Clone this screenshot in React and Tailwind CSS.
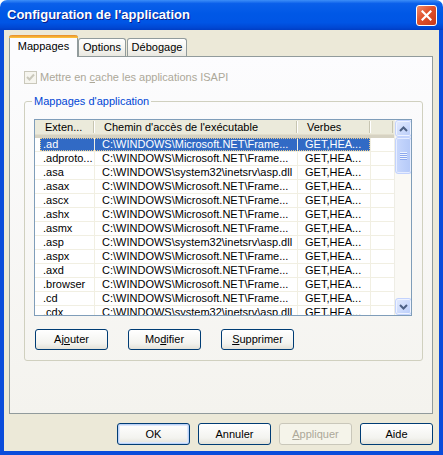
import React from 'react';

const rows = [
  ['.ad', 'C:\\WINDOWS\\Microsoft.NET\\Frame...', 'GET,HEA...'],
  ['.adproto...', 'C:\\WINDOWS\\Microsoft.NET\\Frame...', 'GET,HEA...'],
  ['.asa', 'C:\\WINDOWS\\system32\\inetsrv\\asp.dll', 'GET,HEA...'],
  ['.asax', 'C:\\WINDOWS\\Microsoft.NET\\Frame...', 'GET,HEA...'],
  ['.ascx', 'C:\\WINDOWS\\Microsoft.NET\\Frame...', 'GET,HEA...'],
  ['.ashx', 'C:\\WINDOWS\\Microsoft.NET\\Frame...', 'GET,HEA...'],
  ['.asmx', 'C:\\WINDOWS\\Microsoft.NET\\Frame...', 'GET,HEA...'],
  ['.asp', 'C:\\WINDOWS\\system32\\inetsrv\\asp.dll', 'GET,HEA...'],
  ['.aspx', 'C:\\WINDOWS\\Microsoft.NET\\Frame...', 'GET,HEA...'],
  ['.axd', 'C:\\WINDOWS\\Microsoft.NET\\Frame...', 'GET,HEA...'],
  ['.browser', 'C:\\WINDOWS\\Microsoft.NET\\Frame...', 'GET,HEA...'],
  ['.cd', 'C:\\WINDOWS\\Microsoft.NET\\Frame...', 'GET,HEA...'],
  ['.cdx', 'C:\\WINDOWS\\system32\\inetsrv\\asp.dll', 'GET,HEA...'],
];

function XpButton({ children, w = 'w-[73px]', h = 'h-[22px]', isDefault, disabled }) {
  return (
    <button
      type="button"
      className={`${w} ${h} shrink-0 rounded-[3px] border text-[11px] leading-none flex items-center justify-center ${
        disabled
          ? 'border-[#C9C7BA] bg-[#F5F4EA] text-[#ACA899]'
          : 'border-[#003C74] bg-[linear-gradient(to_bottom,#FFFFFF,#F3F3EF_70%,#E3E1D8)] text-black'
      } ${isDefault ? 'shadow-[inset_0_0_0_1px_#BCD2F7,inset_0_0_0_2px_#DDE8FB]' : ''}`}
    >
      {children}
    </button>
  );
}

function HeaderCell({ w, pl, label }) {
  return (
    <div className={`${w} h-full flex items-center shrink-0`}>
      <span className={`flex-1 ${pl} whitespace-nowrap overflow-hidden`}>{label}</span>
      <span className="w-px h-[12px] bg-[#C7C5B2] mb-[2px]" />
      <span className="w-px h-[12px] bg-white mb-[2px]" />
    </div>
  );
}

function ScrollBtn({ dir }) {
  return (
    <div className="h-[17px] w-[17px] rounded-[3px] border border-[#C3D3FD] bg-[linear-gradient(135deg,#E3EBFE,#BACDFA)] shadow-[inset_0_0_0_1px_#EEF3FF] flex items-center justify-center">
      <svg width="9" height="6" viewBox="0 0 9 6">
        {dir === 'up'
          ? <polyline points="1,5 4.5,1.5 8,5" fill="none" stroke="#4D6185" strokeWidth="2" />
          : <polyline points="1,1 4.5,4.5 8,1" fill="none" stroke="#4D6185" strokeWidth="2" />}
      </svg>
    </div>
  );
}

export default function App() {
  return (
    <div className="w-[443px] h-[455px] flex flex-col font-['Liberation_Sans',Arial,sans-serif] text-[11px] text-black select-none">
      {/* title bar */}
      <div className="h-[30px] shrink-0 rounded-t-[7px] bg-[linear-gradient(to_bottom,#3D8EF8_0%,#0A5FEA_12%,#0058E6_45%,#0055E5_75%,#0048D4_92%,#003DC4_100%)] flex items-center justify-between pl-[7px] pr-[6px]">
        <span className="text-white font-bold text-[13px] [text-shadow:1px_1px_0_#0A1E8C]">Configuration de l'application</span>
        <div className="w-[21px] h-[21px] mt-[1px] rounded-[3px] border border-white bg-[linear-gradient(135deg,#F08A6A,#E0512B_45%,#C8391A)] flex items-center justify-center">
          <svg width="11" height="11" viewBox="0 0 11 11">
            <path d="M1.5 1.5 L9.5 9.5 M9.5 1.5 L1.5 9.5" stroke="white" strokeWidth="2.2" strokeLinecap="square" />
          </svg>
        </div>
      </div>

      <div className="flex-1 flex flex-col bg-[#ECE9D8] border-x-4 border-b-4 border-[#0A4CDB] pl-[5px] pr-[6px] pt-[5px]">
        {/* tabs */}
        <div className="h-[21px] flex items-end shrink-0">
          <div className="relative z-10 w-[69px] h-[22px] -mb-px rounded-t-[3px] border-x border-[#919B9C] bg-[#FCFCFE] flex flex-col">
            <div className="h-[3px] rounded-t-[3px] bg-[linear-gradient(to_bottom,#E68B2C,#FFC73C)] -mx-px" />
            <div className="flex-1 flex items-center justify-center pb-[3px]">Mappages</div>
          </div>
          <div className="w-[48px] h-[18px] rounded-t-[3px] border border-b-0 border-[#919B9C] bg-[linear-gradient(to_bottom,#FFFFFF,#F4F3EE_60%,#E9E8E1)] flex items-center justify-center">Options</div>
          <div className="ml-px w-[60px] h-[18px] rounded-t-[3px] border border-b-0 border-[#919B9C] bg-[linear-gradient(to_bottom,#FFFFFF,#F4F3EE_60%,#E9E8E1)] flex items-center justify-center">Débogage</div>
        </div>

        {/* tab panel */}
        <div className="w-[424px] h-[358px] shrink-0 border border-[#919B9C] bg-[linear-gradient(to_bottom,#FCFCFE,#F4F3EE)] pl-[14px] pt-[14px]">
          <div className="flex items-center h-[13px] gap-[3px] text-[#ACA899]">
            <div className="w-[13px] h-[13px] border border-[#CAC8BB] bg-[#F6F5EF] flex items-center justify-center">
              <svg width="9" height="9" viewBox="0 0 9 9">
                <polyline points="1,4 3.5,6.5 8,1.5" fill="none" stroke="#CAC8BB" strokeWidth="2" />
              </svg>
            </div>
            <span className="whitespace-nowrap">Mettre en <u>c</u>ache les applications ISAPI</span>
          </div>

          <fieldset className="mt-[10px] w-[399px] border border-[#D0D0BF] rounded-[3px] pl-[9px] pb-[10px]">
            <legend className="ml-[-2px] px-[2px] leading-[14px] text-[#0046D5] whitespace-nowrap">Mappages d'application</legend>

            {/* list view */}
            <div className="mt-[11px] w-[378px] h-[197px] border border-[#7F9DB9] bg-white flex overflow-hidden">
              <div className="flex-1 flex flex-col overflow-hidden">
                <div className="h-[18px] shrink-0 flex bg-[#EBEADB] border-b-[3px] border-[#D6D2C2] shadow-[inset_0_-1px_0_#E2DECD]">
                  <HeaderCell w="w-[60px]" pl="pl-[10px]" label="Exten..." />
                  <HeaderCell w="w-[203px]" pl="pl-[9px]" label="Chemin d'accès de l'exécutable" />
                  <HeaderCell w="w-[73px]" pl="pl-[9px]" label="Verbes" />
                  <div className="flex-1 flex items-center justify-start">
                    <span className="w-px h-[12px] bg-[#C7C5B2] ml-[21px] mb-[2px]" />
                  </div>
                </div>
                {rows.map((r, i) =>
                  i === 0 ? (
                    <div key={i} className="h-[14px] shrink-0 flex border-b border-[#F1EFE2] leading-[13px]">
                      <div className="w-[5px] shrink-0" />
                      <div className="flex outline outline-1 outline-dotted outline-[#E6C98E] -outline-offset-1">
                        <div className="w-[55px] border-r border-[#F1EFE2] bg-[#316AC5] text-white pl-[3px] whitespace-nowrap overflow-hidden">{r[0]}</div>
                        <div className="w-[203px] border-r border-[#F1EFE2] bg-[#316AC5] text-white pl-[7px] whitespace-nowrap overflow-hidden">{r[1]}</div>
                        <div className="w-[72px] bg-[#316AC5] text-white pl-[7px] whitespace-nowrap overflow-hidden">{r[2]}</div>
                      </div>
                      <div className="flex-1 border-l border-[#F1EFE2]" />
                    </div>
                  ) : (
                    <div key={i} className="h-[14px] shrink-0 flex border-b border-[#F1EFE2] leading-[13px]">
                      <div className="w-[60px] shrink-0 border-r border-[#F1EFE2] pl-[8px] whitespace-nowrap overflow-hidden">{r[0]}</div>
                      <div className="w-[203px] shrink-0 border-r border-[#F1EFE2] pl-[7px] whitespace-nowrap overflow-hidden">{r[1]}</div>
                      <div className="w-[73px] shrink-0 border-r border-[#F1EFE2] pl-[7px] whitespace-nowrap overflow-hidden">{r[2]}</div>
                      <div className="flex-1" />
                    </div>
                  )
                )}
              </div>

              {/* scrollbar */}
              <div className="w-[17px] shrink-0 flex flex-col bg-[#FAF9F5] border-l border-[#EEEDE5]">
                <ScrollBtn dir="up" />
                <div className="h-[37px] w-[17px] rounded-[3px] border border-[#C3D3FD] bg-[linear-gradient(to_right,#C9D8FC,#BCCFFA_60%,#B5C9F7)] shadow-[inset_0_0_0_1px_#E6EDFF] flex flex-col items-center justify-center gap-[1px]">
                  <span className="w-[7px] h-px bg-[#EEF4FE] shadow-[0_1px_0_#8CA8EE]" />
                  <span className="w-[7px] h-px bg-[#EEF4FE] shadow-[0_1px_0_#8CA8EE]" />
                  <span className="w-[7px] h-px bg-[#EEF4FE] shadow-[0_1px_0_#8CA8EE]" />
                  <span className="w-[7px] h-px bg-[#EEF4FE] shadow-[0_1px_0_#8CA8EE]" />
                </div>
                <div className="flex-1" />
                <ScrollBtn dir="down" />
              </div>
            </div>

            <div className="mt-[13px] ml-px flex gap-[20px]">
              <XpButton h="h-[21px]">Aj<u>o</u>uter</XpButton>
              <XpButton h="h-[21px]">Mo<u>d</u>ifier</XpButton>
              <XpButton h="h-[21px]"><u>S</u>upprimer</XpButton>
            </div>
          </fieldset>
        </div>

        {/* dialog buttons */}
        <div className="mt-[9px] flex justify-end gap-[8px]">
          <XpButton isDefault>OK</XpButton>
          <XpButton>Annuler</XpButton>
          <XpButton disabled><u>A</u>ppliquer</XpButton>
          <XpButton>Aide</XpButton>
        </div>
      </div>
    </div>
  );
}
